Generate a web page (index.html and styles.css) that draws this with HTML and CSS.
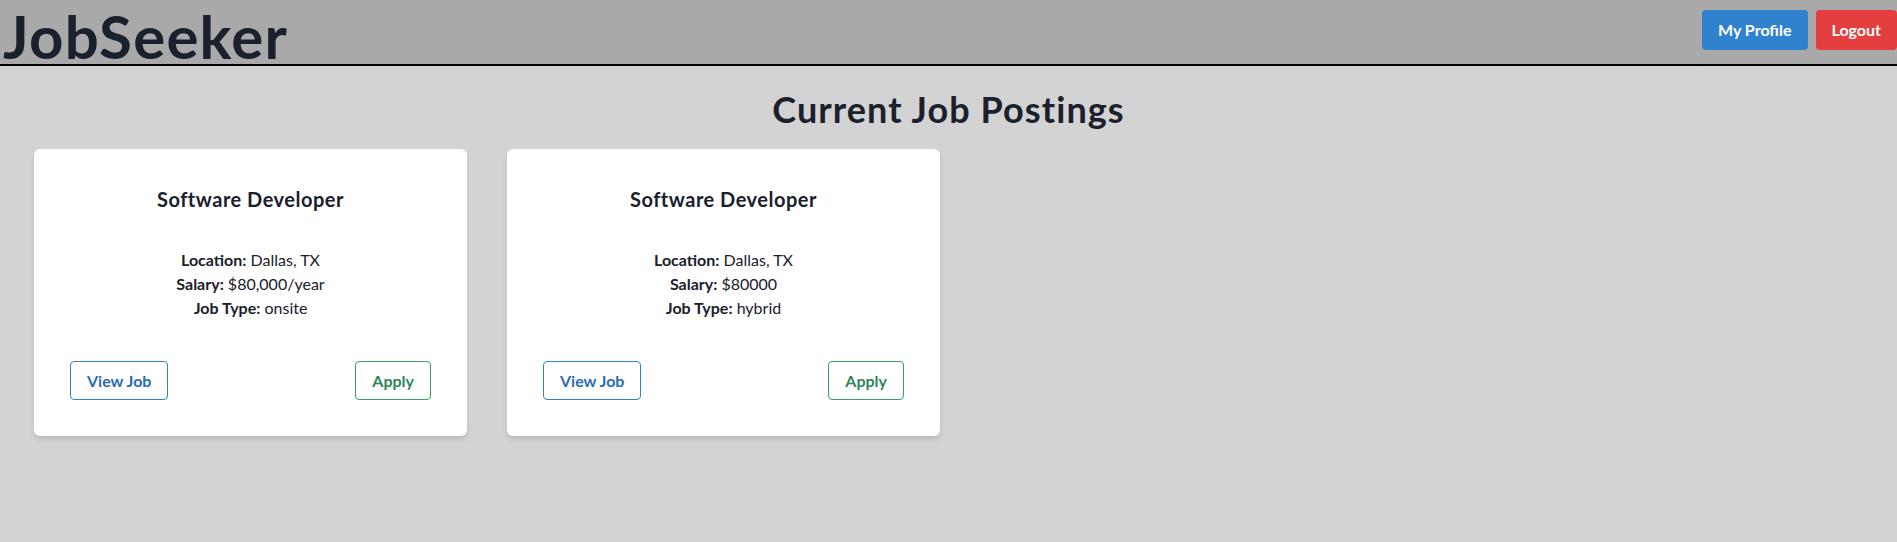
FILE: index.html
```html
<!DOCTYPE html>
<html lang="en">
<head>
<meta charset="utf-8">
<title>JobSeeker</title>
<link rel="stylesheet" href="styles.css">
</head>
<body>
<header class="topbar">
  <h1 class="brand">JobSeeker</h1>
  <nav class="nav">
    <button class="btn btn-blue">My Profile</button>
    <button class="btn btn-red">Logout</button>
  </nav>
</header>
<main class="main">
  <h2 class="page-title">Current Job Postings</h2>
  <div class="grid">
    <article class="card">
      <h3 class="card-title">Software Developer</h3>
      <div class="info">
        <p><strong>Location:</strong> Dallas, TX</p>
        <p><strong>Salary:</strong> $80,000/year</p>
        <p><strong>Job Type:</strong> onsite</p>
      </div>
      <div class="actions">
        <button class="obtn obtn-blue">View Job</button>
        <button class="obtn obtn-green">Apply</button>
      </div>
    </article>
    <article class="card">
      <h3 class="card-title">Software Developer</h3>
      <div class="info">
        <p><strong>Location:</strong> Dallas, TX</p>
        <p><strong>Salary:</strong> $80000</p>
        <p><strong>Job Type:</strong> hybrid</p>
      </div>
      <div class="actions">
        <button class="obtn obtn-blue">View Job</button>
        <button class="obtn obtn-green">Apply</button>
      </div>
    </article>
  </div>
</main>
</body>
</html>
```

FILE: styles.css
```css
* { box-sizing: border-box; }
html, body {
  margin: 0;
  padding: 0;
}
body {
  background: #d3d3d3;
  font-family: "Lato", "Noto Sans", sans-serif;
  color: #1a202c;
  min-height: 542px;
}
.topbar {
  display: flex;
  justify-content: space-between;
  align-items: flex-start;
  height: 66px;
  background: #a9a9a9;
  border-bottom: 2px solid #000;
}
.brand {
  margin: 0 0 0 3px;
  font-size: 60px;
  line-height: 72px;
  height: 64px;
  font-weight: 700;
  letter-spacing: 0.02em;
  color: #1a202c;
}
.nav {
  display: flex;
  gap: 8px;
  margin-top: 10px;
}
.btn {
  font-family: inherit;
  font-size: 16px;
  line-height: 24px;
  font-weight: 700;
  color: #fff;
  border: 0;
  border-radius: 4px;
  padding: 8px 16px;
  cursor: pointer;
}
.btn-blue { background: #3182ce; }
.btn-red { background: #e53e3e; }
.main {
  padding: 0 0 0 34px;
}
.page-title {
  margin: 23px 0 20px -34px;
  text-align: center;
  font-size: 36px;
  line-height: 40px;
  font-weight: 700;
  letter-spacing: 0.03em;
}
.grid {
  display: grid;
  grid-template-columns: repeat(2, 433px);
  gap: 40px;
}
.card {
  background: #fff;
  border-radius: 6px;
  box-shadow: 0 4px 6px -1px rgba(0,0,0,0.1), 0 2px 4px -1px rgba(0,0,0,0.06);
  padding: 36px;
  text-align: center;
}
.card-title {
  margin: 0;
  font-size: 20px;
  line-height: 28px;
  font-weight: 700;
  letter-spacing: 0.025em;
}
.info {
  margin-top: 35px;
}
.info p {
  margin: 0;
  font-size: 16px;
  line-height: 24px;
}
.actions {
  display: flex;
  justify-content: space-between;
  margin-top: 41px;
}
.obtn {
  font-family: inherit;
  font-size: 16px;
  line-height: 23px;
  font-weight: 700;
  background: #fff;
  border: 1px solid;
  border-radius: 4px;
  padding: 7px 16px;
  cursor: pointer;
}
.obtn-blue { color: #2b6cb0; border-color: #3182ce; }
.obtn-green { color: #2f855a; border-color: #38a169; }
```
